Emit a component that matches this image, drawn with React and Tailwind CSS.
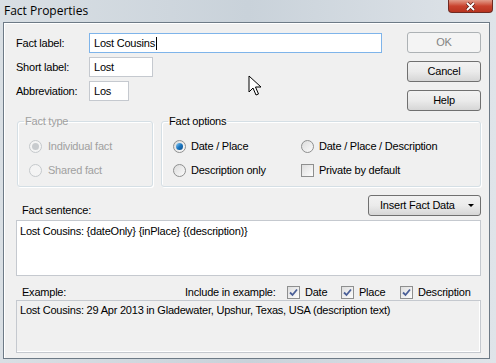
import React from "react";

const font = { fontFamily: '"Liberation Sans", Arial, sans-serif', letterSpacing: "-0.22px" };

const Radio = ({ checked, disabled }) => (
  <span
    className={`relative inline-flex items-center justify-center w-[13px] h-[13px] rounded-full border ${
      disabled ? "border-[#c5c9cc] bg-[#f4f4f4]" : "border-[#8e8f8f] bg-gradient-to-br from-[#dcdcdc] to-[#fbfbfb]"
    }`}
  >
    {checked && (
      <span
        className={`w-[7px] h-[7px] rounded-full ${
          disabled ? "bg-[#c8cbce]" : "bg-gradient-to-br from-[#8ad1f6] via-[#1b77c1] to-[#0d4d8c]"
        }`}
      />
    )}
  </span>
);

const Check = ({ checked }) => (
  <span className="inline-flex items-center justify-center w-[13px] h-[13px] border border-[#8e8f8f] bg-gradient-to-br from-[#dedede] to-[#fdfdfd]">
    {checked && (
      <svg width="9" height="9" viewBox="0 0 9 9">
        <path d="M1 4.5 L3.5 7 L8 1.5" fill="none" stroke="#4a5f97" strokeWidth="1.8" />
      </svg>
    )}
  </span>
);

const Button = ({ children, disabled, className = "justify-center" }) => (
  <div
    className={`flex items-center h-[21px] rounded-[3px] border text-[11px] ${
      disabled
        ? "border-[#adb2b5] bg-[#f4f4f4] text-[#838383]"
        : "border-[#707070] bg-gradient-to-b from-[#f2f2f2] via-[#ebebeb] to-[#d6d6d6] text-black"
    } ${className}`}
  >
    {children}
  </div>
);

const Field = ({ label, value, width, focused, caret }) => (
  <div className="flex items-center h-[20px]">
    <span className="w-[73px] text-[11px]">{label}</span>
    <div
      className={`h-[20px] flex items-center px-[4px] bg-white border text-[11px] ${
        focused ? "border-[#7eb4ea]" : "border-[#c5c9cf]"
      } ${width}`}
    >
      {value}
      {caret && <span className="ml-[1px] w-px h-[13px] bg-black" />}
    </div>
  </div>
);

export default function App() {
  return (
    <div
      className="w-[496px] h-[363px] overflow-hidden flex flex-col bg-gradient-to-r from-[#d9dfe4] via-[#c9d2da] to-[#dfe4e9]"
      style={font}
    >
      {/* Title bar */}
      <div className="h-[22px] flex items-start justify-between shrink-0">
        <span
          className="ml-[4px] mt-[2px] text-[12px] text-black tracking-normal"
          style={{ fontFamily: '"Open Sans", "Noto Sans", sans-serif' }}
        >
          Fact Properties
        </span>
        <div className="mr-[3px] w-[45px] h-[13px] rounded-b-[4px] border border-t-0 border-[#6f2a22] bg-gradient-to-b from-[#e19b8a] via-[#c9432f] to-[#b8341f] flex items-center justify-center">
          <svg width="11" height="9" viewBox="0 0 11 9">
            <path d="M2 1 L9 8 M9 1 L2 8" stroke="#5a1a12" strokeWidth="3.2" />
            <path d="M2 1 L9 8 M9 1 L2 8" stroke="#fff" strokeWidth="1.8" />
          </svg>
        </div>
      </div>

      {/* Client area */}
      <div className="relative ml-[3px] w-[487px] h-[337px] border border-[#6d7a86] bg-[#f0f0f0] shadow-[inset_1px_1px_0_#fff] pl-[12px] pr-[8px] pt-[9px]">
        {/* top section */}
        <div className="flex justify-between">
          <div className="flex flex-col gap-[4px] pt-[1px]">
            <Field label="Fact label:" value="Lost Cousins" width="w-[293px]" focused caret />
            <Field label="Short label:" value="Lost" width="w-[64px]" />
            <Field label="Abbreviation:" value="Los" width="w-[40px]" />
          </div>
          <div className="flex flex-col gap-[8px] w-[74px]">
            <Button disabled>OK</Button>
            <Button>Cancel</Button>
            <Button>Help</Button>
          </div>
        </div>

        {/* mouse pointer */}
        <svg className="absolute left-[244px] top-[52px]" width="14" height="22" viewBox="0 0 14 22">
          <path d="M1 1 L1 17 L5 13 L8 20 L10.5 19 L7.5 12 L13 12 Z" fill="#fff" stroke="#000" strokeWidth="1" strokeLinejoin="round" />
        </svg>

        {/* group boxes */}
        <div className="flex gap-[8px] mt-[3px] pl-[1px]">
          <fieldset className="w-[136px] h-[73px] rounded-[3px] border border-[#d5dfe5] shadow-[inset_1px_1px_0_#fff,1px_1px_0_#fff] px-[8px] pt-[11px]">
            <legend className="px-[1px] text-[11px] leading-[14px] text-[#a0a0a0] ml-[-2px]">Fact type</legend>
            <div className="flex flex-col gap-[10px] pl-[3px]">
              <label className="flex items-center gap-[6px] h-[14px] text-[11px] text-[#a0a0a0]">
                <Radio checked disabled />
                Individual fact
              </label>
              <label className="flex items-center gap-[6px] h-[14px] text-[11px] text-[#a0a0a0]">
                <Radio disabled />
                Shared fact
              </label>
            </div>
          </fieldset>
          <fieldset className="w-[320px] h-[73px] rounded-[3px] border border-[#d5dfe5] shadow-[inset_1px_1px_0_#fff,1px_1px_0_#fff] px-[8px] pt-[11px]">
            <legend className="px-[1px] text-[11px] leading-[14px] text-black ml-[-2px]">Fact options</legend>
            <div className="grid grid-cols-[128px_1fr] gap-y-[10px] pl-[3px]">
              <label className="flex items-center gap-[5px] h-[14px] text-[11px]">
                <Radio checked />
                Date / Place
              </label>
              <label className="flex items-center gap-[5px] h-[14px] text-[11px]">
                <Radio />
                Date / Place / Description
              </label>
              <label className="flex items-center gap-[5px] h-[14px] text-[11px]">
                <Radio />
                Description only
              </label>
              <label className="flex items-center gap-[5px] h-[14px] text-[11px]">
                <Check />
                Private by default
              </label>
            </div>
          </fieldset>
        </div>

        {/* Fact sentence */}
        <div className="flex items-end justify-between mt-[8px] h-[21px]">
          <span className="ml-[6px] mb-[-2px] text-[11px]">Fact sentence:</span>
          <Button className="w-[113px] justify-start pl-[11px] pr-[6px]">
            <span>Insert Fact Data</span>
            <span className="ml-auto w-0 h-0 border-l-[3px] border-r-[3px] border-t-[3px] border-l-transparent border-r-transparent border-t-black" />
          </Button>
        </div>
        <div className="mt-[4px] h-[56px] bg-white border border-[#c5c9cf] px-[3px] pt-[2px] text-[11px]">
          {"Lost Cousins: {dateOnly} {inPlace} {(description)}"}
        </div>

        {/* Example */}
        <div className="flex items-center mt-[9px] h-[14px] text-[11px]">
          <span className="ml-[6px] w-[163px]">Example:</span>
          <span className="w-[102px]">Include in example:</span>
          <label className="flex items-center gap-[5px] w-[54px]">
            <Check checked />
            Date
          </label>
          <label className="flex items-center gap-[5px] w-[59px]">
            <Check checked />
            Place
          </label>
          <label className="flex items-center gap-[5px]">
            <Check checked />
            Description
          </label>
        </div>
        <div className="mt-[1px] h-[53px] bg-[#f0f0f0] border border-[#c5c9cf] shadow-[inset_-1px_-1px_0_#fff] px-[3px] pt-[1px] text-[11px]">
          Lost Cousins: 29 Apr 2013 in Gladewater, Upshur, Texas, USA (description text)
        </div>
      </div>
    </div>
  );
}
